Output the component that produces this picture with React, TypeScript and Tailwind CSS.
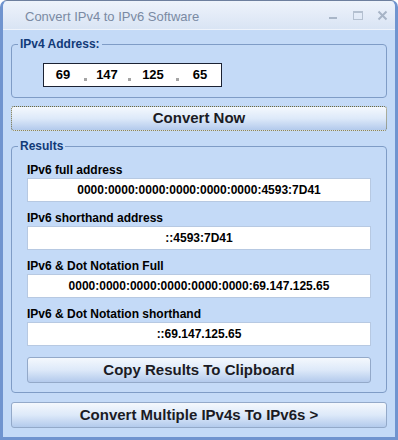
import React from 'react';

const font = "font-['Liberation_Sans',Arial,sans-serif]";

const results = [
  { label: 'IPv6 full address', value: '0000:0000:0000:0000:0000:0000:4593:7D41' },
  { label: 'IPv6 shorthand address', value: '::4593:7D41' },
  { label: 'IPv6 & Dot Notation Full', value: '0000:0000:0000:0000:0000:0000:69.147.125.65' },
  { label: 'IPv6 & Dot Notation shorthand', value: '::69.147.125.65' }
];

const octets = [
  { value: '69', w: 'w-[38px]' },
  { value: '147', w: 'w-[38px]' },
  { value: '125', w: 'w-[42px]' },
  { value: '65', w: 'w-[40px]' }
];

const XpButton = ({
  children,
  focused,
  className
}: {
  children: React.ReactNode;
  focused?: boolean;
  className?: string;
}) => (
  <button
    className={`flex items-center justify-center rounded-[3px] border bg-gradient-to-b from-[#f4f8fd] via-[#dde9f9] to-[#b3caec] text-[15px] font-bold text-[#1b1b24] ${
      focused ? 'border-dotted border-[#6e6a3c]' : 'border-[#93a9c9]'
    } ${className ?? ''}`}
  >
    {children}
  </button>
);

const TitleButtons = () => (
  <div className="flex items-center gap-[13px] pr-[7px]">
    <svg width="11" height="11" viewBox="0 0 11 11">
      <rect x="1" y="7" width="8" height="2" fill="#a9b6c8" />
    </svg>
    <svg width="12" height="11" viewBox="0 0 12 11">
      <rect x="1.5" y="1.5" width="9" height="8" fill="none" stroke="#b4c0d0" strokeWidth="1" />
      <rect x="1" y="1" width="10" height="2" fill="#b4c0d0" />
    </svg>
    <svg width="11" height="11" viewBox="0 0 11 11">
      <path d="M1.5 1.5 L9.5 9.5 M9.5 1.5 L1.5 9.5" stroke="#a7b4c6" strokeWidth="2" />
    </svg>
  </div>
);

export default function App() {
  return (
    <div
      className={`${font} flex h-[440px] w-[398px] flex-col overflow-hidden rounded-t-[7px] border border-t-[#6d7f9e] border-x-[3px] border-b-[3px] border-x-[#7094cf] border-b-[#7094cf] bg-[#c4daf7]`}
    >
      <div className="flex h-[29px] shrink-0 items-center justify-between border-b border-[#eef3fb] bg-gradient-to-b from-[#eef3fb] to-[#d9e4f4]">
        <span className="pl-[22px] pt-[3px] text-[13px] text-[#7a8aa3]">
          Convert IPv4 to IPv6 Software
        </span>
        <TitleButtons />
      </div>

      <div className="flex flex-1 flex-col px-[8px]">
        <fieldset className="mt-[7px] rounded-[4px] border border-[#7f9cc6] px-[31px] pb-[10px] pt-[12px]">
          <legend className="ml-[-25px] px-[2px] text-[12px] font-bold leading-[14px] text-[#123a78]">
            IPv4 Address:
          </legend>
          <div className="flex h-[24px] w-[179px] items-center border border-[#1b2233] bg-white text-[13px] font-bold text-black">
            {octets.map((o, i) => (
              <React.Fragment key={o.value}>
                <span className={`${o.w} text-center`}>{o.value}</span>
                {i < octets.length - 1 && (
                  <span className="flex w-[6px] justify-center pt-[8px]">
                    <span className="block h-[3px] w-[3px] bg-[#a5a5a5]" />
                  </span>
                )}
              </React.Fragment>
            ))}
          </div>
        </fieldset>

        <XpButton focused className="mt-[8px] h-[25px] w-full">
          Convert Now
        </XpButton>

        <fieldset className="mt-[8px] rounded-[4px] border border-[#7f9cc6] px-[15px] pb-[9px] pt-[10px]">
          <legend className="ml-[-9px] px-[2px] text-[12px] font-bold leading-[14px] text-[#123a78]">
            Results
          </legend>
          <div className="flex flex-col gap-[9px]">
            {results.map((r) => (
              <div key={r.label} className="flex flex-col">
                <span className="h-[15px] text-[12px] font-bold leading-[15px] text-black">
                  {r.label}
                </span>
                <div className="flex h-[24px] items-center justify-center border border-[#b7c9e2] bg-white text-[12px] font-bold text-black">
                  {r.value}
                </div>
              </div>
            ))}
          </div>
          <XpButton className="mt-[11px] h-[26px] w-full">Copy Results To Clipboard</XpButton>
        </fieldset>

        <XpButton className="mt-[9px] h-[26px] w-full">Convert Multiple IPv4s To IPv6s &gt;</XpButton>
      </div>
    </div>
  );
}
